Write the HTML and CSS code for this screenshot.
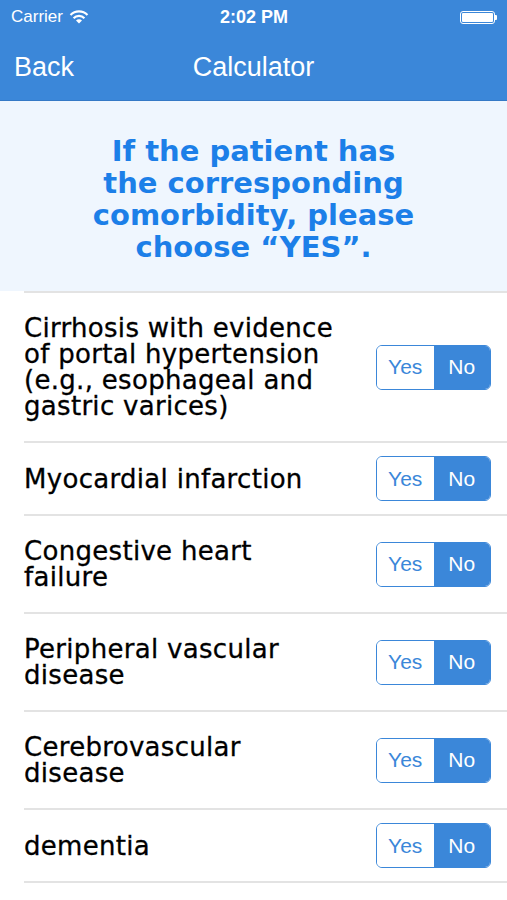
FILE: index.html
```html
<!DOCTYPE html>
<html lang="en">
<head>
    <meta charset="UTF-8">
    <meta name="viewport" content="width=device-width, initial-scale=1.0">
    <title>Calculator</title>
    <link rel="stylesheet" href="styles.css">
</head>
<body>
    <!-- Top bar: status line and navigation -->
    <header class="topbar">
        <div class="status">
            <div class="status-left">
                <span>Carrier</span>
                <svg class="wifi" width="20" height="14" viewBox="0 0 20 14">
                    <path d="M1.5 5 A12 12 0 0 1 18.5 5" fill="none" stroke="#fff" stroke-width="2.2"/>
                    <path d="M4.6 8.2 A7.5 7.5 0 0 1 15.4 8.2" fill="none" stroke="#fff" stroke-width="2.2"/>
                    <path d="M10 13.5 L7 10.6 A4.2 4.2 0 0 1 13 10.6 Z" fill="#fff"/>
                </svg>
            </div>
            <div class="status-time">2:02 PM</div>
            <div class="status-right">
                <div class="battery"><div class="battery-fill"></div></div>
                <div class="battery-tip"></div>
            </div>
        </div>
        <nav class="navbar">
            <span class="nav-back">Back</span>
            <span class="nav-title">Calculator</span>
        </nav>
    </header>

    <!-- Instruction banner -->
    <section class="banner">
        <h1>If the patient has<br>the corresponding<br>comorbidity, please<br>choose “YES”.</h1>
    </section>

    <!-- List of comorbidities -->
    <ul class="list">
        <li class="row">
            <span class="label">Cirrhosis with evidence of portal hypertension (e.g., esophageal and gastric varices)</span>
            <div class="toggle"><span class="yes">Yes</span><span class="no">No</span></div>
        </li>
        <li class="row">
            <span class="label">Myocardial infarction</span>
            <div class="toggle"><span class="yes">Yes</span><span class="no">No</span></div>
        </li>
        <li class="row">
            <span class="label">Congestive heart failure</span>
            <div class="toggle"><span class="yes">Yes</span><span class="no">No</span></div>
        </li>
        <li class="row">
            <span class="label">Peripheral vascular disease</span>
            <div class="toggle"><span class="yes">Yes</span><span class="no">No</span></div>
        </li>
        <li class="row">
            <span class="label">Cerebrovascular disease</span>
            <div class="toggle"><span class="yes">Yes</span><span class="no">No</span></div>
        </li>
        <li class="row">
            <span class="label">dementia</span>
            <div class="toggle"><span class="yes">Yes</span><span class="no">No</span></div>
        </li>
    </ul>
</body>
</html>
```

FILE: styles.css
```css
body {
    margin: 0;
    font-family: "Liberation Sans", Arial, sans-serif;
    background-color: #fff;
    color: #000;
}
.topbar {
    background-color: #3b87d9;
    color: #fff;
    border-bottom: 1px solid #3479c6;
}
.status {
    height: 34px;
    display: flex;
    align-items: center;
    justify-content: space-between;
    padding: 0 10px 0 11px;
    font-size: 17px;
}
.status-left {
    display: flex;
    align-items: center;
    gap: 6px;
    width: 130px;
}
.status-time {
    font-weight: bold;
    font-size: 18px;
}
.status-right {
    width: 130px;
    display: flex;
    justify-content: flex-end;
    align-items: center;
}
.battery {
    width: 35px;
    height: 13px;
    border: 1px solid #fff;
    border-radius: 3px;
    padding: 1px;
    box-sizing: border-box;
}
.battery-fill {
    width: 100%;
    height: 100%;
    background-color: #fff;
    border-radius: 1px;
}
.battery-tip {
    width: 2px;
    height: 5px;
    background-color: #fff;
    border-radius: 0 1px 1px 0;
}
.navbar {
    height: 66px;
    display: flex;
    align-items: center;
    position: relative;
    font-size: 27px;
}
.nav-back {
    padding-left: 14px;
}
.nav-title {
    position: absolute;
    left: 0;
    right: 0;
    text-align: center;
    pointer-events: none;
}
.banner {
    background-color: #eff6fe;
    height: 190px;
    display: flex;
    align-items: center;
    justify-content: center;
}
.banner h1 {
    margin: 0;
    color: #1c7fe8;
    font-family: "DejaVu Sans", sans-serif;
    font-size: 29px;
    line-height: 32px;
    font-weight: bold;
    text-align: center;
    padding-top: 6px;
}
.list {
    list-style: none;
    margin: 0;
    padding: 0 0 0 24px;
}
.row {
    display: flex;
    align-items: center;
    justify-content: space-between;
    padding: 13px 16px 13px 0;
    border-top: 2px solid #e3e3e3;
}
.row:last-child {
    border-bottom: 2px solid #e3e3e3;
}
.label {
    font-family: "DejaVu Sans", sans-serif;
    font-size: 26px;
    line-height: 26px;
    letter-spacing: 0.3px;
    max-width: 314px;
    padding: 9px 0;
    -webkit-text-stroke: 0.3px #000;
}
.toggle {
    display: flex;
    width: 115px;
    height: 45px;
    border: 1px solid #3b87d9;
    border-radius: 6px;
    overflow: hidden;
    box-sizing: border-box;
    font-size: 21px;
    flex-shrink: 0;
}
.toggle span {
    flex: 1;
    display: flex;
    align-items: center;
    justify-content: center;
}
.yes {
    color: #3b87d9;
    background-color: #fff;
}
.no {
    color: #fff;
    background-color: #3b87d9;
}
```
